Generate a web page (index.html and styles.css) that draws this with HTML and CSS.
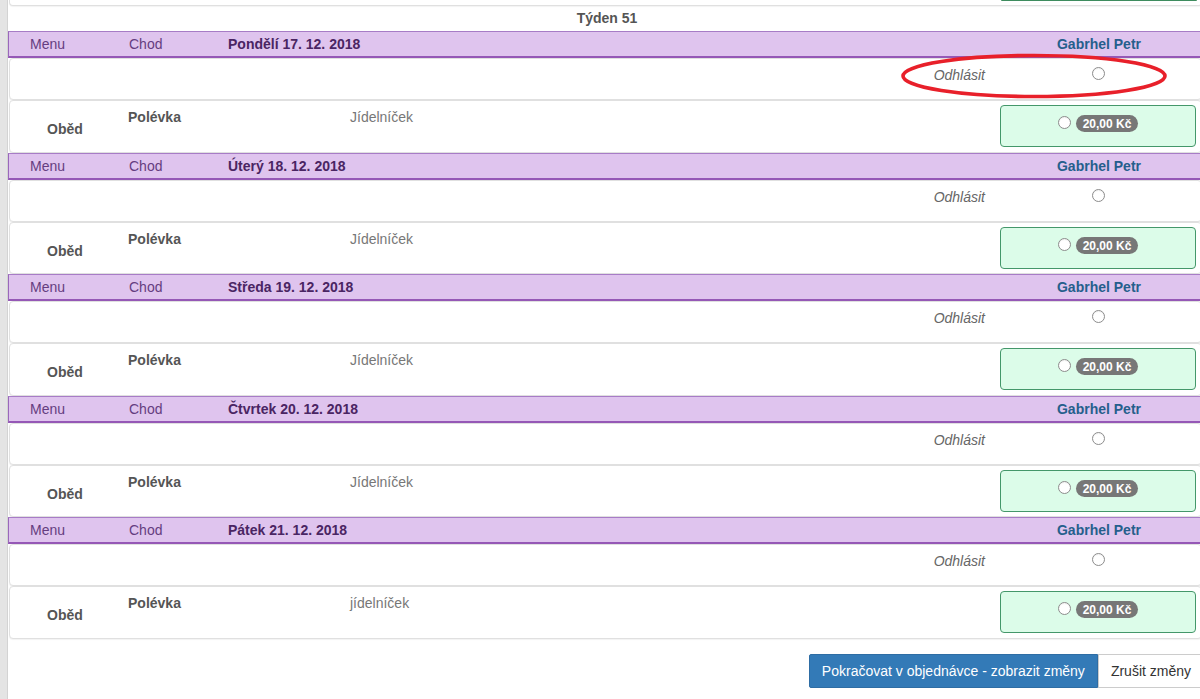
FILE: index.html
```html
<!DOCTYPE html>
<html lang="cs">
<head>
<meta charset="utf-8">
<title>Objednávky</title>
<link rel="stylesheet" href="styles.css">
</head>
<body>
<div class="page">
  <div class="side"></div>
  <div class="main">
    <div class="card prev"><div class="box-tail"></div></div>
    <div class="week">Týden 51</div>

    <div class="day">
      <div class="dayhead"><span class="c-menu">Menu</span><span class="c-chod">Chod</span><span class="c-date">Pondělí 17. 12. 2018</span><span class="c-name">Gabrhel Petr</span></div>
      <div class="card off"><span class="off-label">Odhlásit</span><span class="off-radio"><input type="radio" class="radio" name="d1"></span></div>
      <div class="card meal"><span class="m-type">Oběd</span><span class="m-course">Polévka</span><span class="m-desc">Jídelníček</span><div class="pricebox"><input type="radio" class="radio" name="d1"><span class="badge">20,00 Kč</span></div></div>
    </div>

    <div class="day">
      <div class="dayhead"><span class="c-menu">Menu</span><span class="c-chod">Chod</span><span class="c-date">Úterý 18. 12. 2018</span><span class="c-name">Gabrhel Petr</span></div>
      <div class="card off"><span class="off-label">Odhlásit</span><span class="off-radio"><input type="radio" class="radio" name="d2"></span></div>
      <div class="card meal"><span class="m-type">Oběd</span><span class="m-course">Polévka</span><span class="m-desc">Jídelníček</span><div class="pricebox"><input type="radio" class="radio" name="d2"><span class="badge">20,00 Kč</span></div></div>
    </div>

    <div class="day">
      <div class="dayhead"><span class="c-menu">Menu</span><span class="c-chod">Chod</span><span class="c-date">Středa 19. 12. 2018</span><span class="c-name">Gabrhel Petr</span></div>
      <div class="card off"><span class="off-label">Odhlásit</span><span class="off-radio"><input type="radio" class="radio" name="d3"></span></div>
      <div class="card meal"><span class="m-type">Oběd</span><span class="m-course">Polévka</span><span class="m-desc">Jídelníček</span><div class="pricebox"><input type="radio" class="radio" name="d3"><span class="badge">20,00 Kč</span></div></div>
    </div>

    <div class="day">
      <div class="dayhead"><span class="c-menu">Menu</span><span class="c-chod">Chod</span><span class="c-date">Čtvrtek 20. 12. 2018</span><span class="c-name">Gabrhel Petr</span></div>
      <div class="card off"><span class="off-label">Odhlásit</span><span class="off-radio"><input type="radio" class="radio" name="d4"></span></div>
      <div class="card meal"><span class="m-type">Oběd</span><span class="m-course">Polévka</span><span class="m-desc">Jídelníček</span><div class="pricebox"><input type="radio" class="radio" name="d4"><span class="badge">20,00 Kč</span></div></div>
    </div>

    <div class="day">
      <div class="dayhead"><span class="c-menu">Menu</span><span class="c-chod">Chod</span><span class="c-date">Pátek 21. 12. 2018</span><span class="c-name">Gabrhel Petr</span></div>
      <div class="card off"><span class="off-label">Odhlásit</span><span class="off-radio"><input type="radio" class="radio" name="d5"></span></div>
      <div class="card meal"><span class="m-type">Oběd</span><span class="m-course">Polévka</span><span class="m-desc">jídelníček</span><div class="pricebox"><input type="radio" class="radio" name="d5"><span class="badge">20,00 Kč</span></div></div>
    </div>

    <div class="actions">
      <button class="btn btn-primary">Pokračovat v objednávce - zobrazit změny</button><button class="btn btn-default">Zrušit změny</button>
    </div>
  </div>
</div>
<svg class="annot" width="272" height="52" viewBox="0 0 272 52" aria-hidden="true">
  <ellipse cx="135" cy="25" rx="131" ry="20.5" fill="none" stroke="#e8202a" stroke-width="3.6"/>
</svg>
</body>
</html>
```

FILE: styles.css
```css
html, body {
  margin: 0;
  padding: 0;
  background: #fff;
  overflow: hidden;
}
body {
  font-family: "Liberation Sans", Arial, sans-serif;
  font-size: 14px;
  line-height: 20px;
  color: #333;
  position: relative;
  width: 1200px;
  height: 699px;
}
.page {
  display: flex;
  align-items: stretch;
  width: 1210px;
  height: 699px;
}
.side {
  width: 7px;
  flex: none;
  background: #e4e4e4;
  border-right: 1px solid #d3d3d3;
}
.main {
  width: 1194px;
  flex: none;
}
.card {
  box-sizing: border-box;
  margin-left: 1px;
  border: 1px solid #e0e0e0;
  border-radius: 4px;
  background: #fff;
  box-shadow: 0 1px 1px rgba(0, 0, 0, 0.05);
}
.prev {
  height: 6px;
  border-top: none;
  border-top-left-radius: 0;
  border-top-right-radius: 0;
  display: flex;
  justify-content: flex-end;
}
.box-tail {
  width: 196px;
  height: 0;
  margin-right: 4px;
  border-bottom: 1.5px solid #3e8c5e;
  border-radius: 0 0 3px 3px;
}
.week {
  height: 25px;
  line-height: 25px;
  text-align: center;
  font-weight: bold;
  color: #555;
  padding-left: 4px;
}
.day {
  display: flex;
  flex-direction: column;
}
.dayhead {
  box-sizing: border-box;
  height: 27px;
  display: grid;
  grid-template-columns: 120px 99px 1fr 196px 5px;
  background: #dfc4ee;
  border-top: 1px solid #a77cc6;
  border-bottom: 2px solid #9558b6;
  border-left: 1px solid #9a68bb;
  line-height: 24px;
}
.c-menu {
  padding-left: 21px;
  color: #653d80;
}
.c-chod {
  color: #653d80;
}
.c-date {
  font-weight: bold;
  color: #4a2563;
}
.c-name {
  text-align: center;
  font-weight: bold;
  color: #255f8c;
}
.off {
  height: 42px;
  display: grid;
  grid-template-columns: 1fr 196px 5px;
  padding-top: 6px;
}
.off-label {
  text-align: right;
  padding-right: 15px;
  font-style: italic;
  color: #666;
}
.off-radio {
  display: flex;
  justify-content: center;
  padding-top: 2px;
  padding-left: 1px;
}
.meal {
  height: 52.5px;
  display: grid;
  grid-template-columns: 108px 232px 1fr 196px 5px;
  align-items: start;
}
.m-type {
  padding-top: 18px;
  text-align: center;
  font-weight: bold;
  color: #555;
  padding-left: 2px;
}
.m-course {
  padding-top: 6px;
  padding-left: 10px;
  font-weight: bold;
  color: #555;
}
.m-desc {
  padding-top: 6px;
  color: #777;
}
.pricebox {
  box-sizing: border-box;
  margin-top: 4px;
  height: 42px;
  background: #dcfce9;
  border: 1px solid #44976a;
  border-radius: 4px;
  display: flex;
  justify-content: center;
  align-items: flex-start;
  gap: 5px;
  padding-top: 9px;
}
.radio {
  -webkit-appearance: none;
  appearance: none;
  box-sizing: border-box;
  width: 13px;
  height: 13px;
  margin: 0;
  border: 1px solid #8c8c8c;
  border-radius: 50%;
  background: #fff;
  box-shadow: inset 0 1px 1px rgba(0, 0, 0, 0.06);
}
.pricebox .radio {
  margin-top: 1px;
}
.badge {
  display: inline-block;
  padding: 3px 7px 2px;
  font-size: 12px;
  font-weight: bold;
  line-height: 12px;
  color: #fff;
  background: #777;
  border-radius: 10px;
  white-space: nowrap;
}
.actions {
  display: flex;
  justify-content: flex-end;
  margin-top: 15.5px;
  margin-right: -2px;
}
.btn {
  font-family: "Liberation Sans", Arial, sans-serif;
  font-size: 14px;
  line-height: 20px;
  padding: 6px 12px;
  border: 1px solid transparent;
  margin: 0;
  cursor: pointer;
  white-space: nowrap;
}
.btn-primary {
  background: #337ab7;
  border-color: #2e6da4;
  color: #fff;
  border-radius: 2px 0 0 2px;
}
.btn-default {
  background: #fff;
  border-color: #ccc;
  color: #333;
  border-radius: 0;
}
.annot {
  position: absolute;
  left: 899px;
  top: 51px;
  pointer-events: none;
}
```
